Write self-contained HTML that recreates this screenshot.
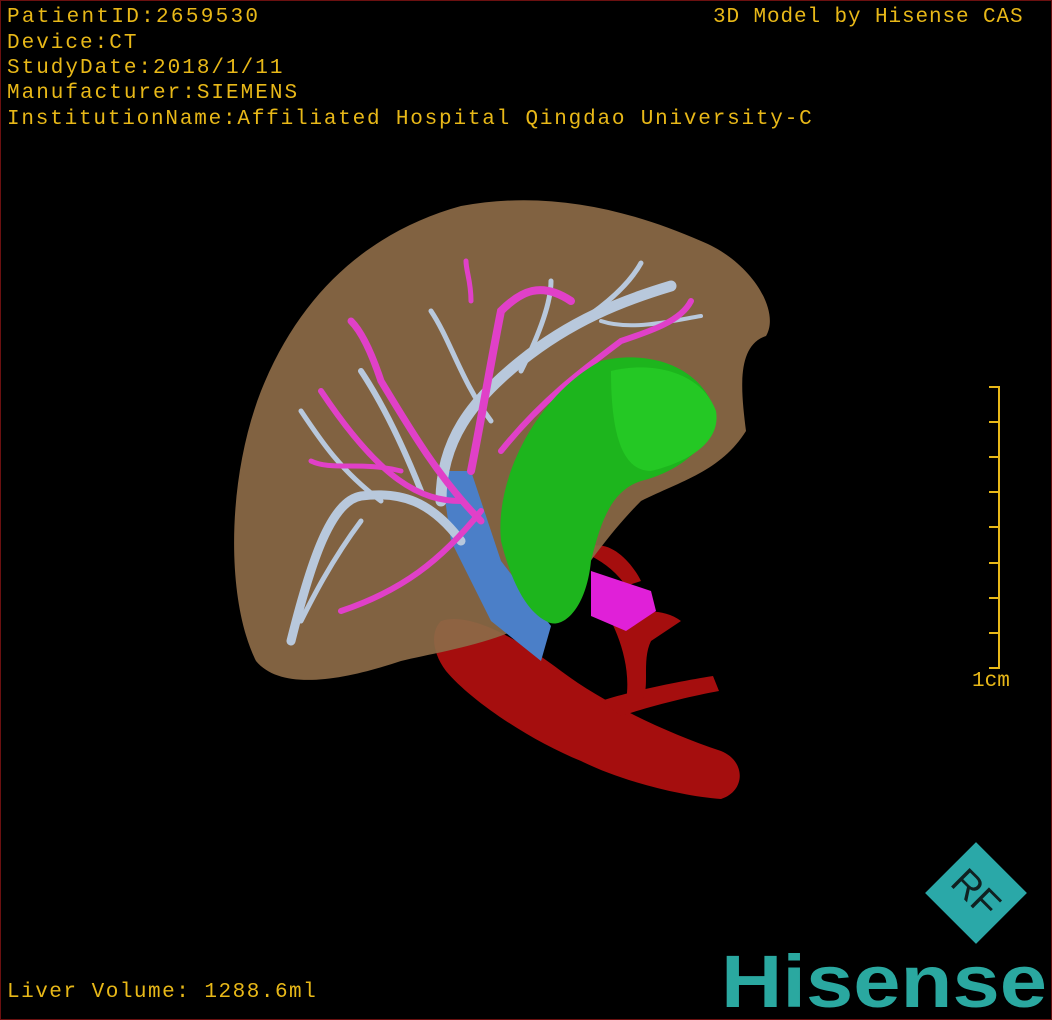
<!DOCTYPE html>
<html><head><meta charset="utf-8"><style>
html,body{margin:0;padding:0;background:#000}
#w{position:relative;width:1050px;height:1018px;border:1px solid #6b1010;background:#000;overflow:hidden;font-family:"Liberation Mono","DejaVu Sans Mono",monospace;color:#e8b818}
.t{position:absolute;font-size:21px;line-height:25px;white-space:pre;letter-spacing:2px}
svg{position:absolute;left:0;top:0}
</style></head><body><div id="w">
<svg width="1050" height="1018" viewBox="0 0 1050 1018">
<g fill="#a50e0e">
<path d="M440 620 C470 610 520 640 560 670 C600 700 660 730 720 750 C745 760 745 790 720 798 C680 795 620 780 580 760 C530 740 470 700 445 670 C430 650 430 630 440 620Z"/>
<path d="M600 700 C630 690 680 680 712 675 L718 690 C690 695 650 705 620 715Z"/>
<path d="M610 620 C630 610 660 605 680 620 L650 640 C640 660 650 690 640 700 L625 700 C630 670 620 640 610 620Z"/>
<path d="M590 545 C610 540 630 560 640 580 L625 585 C615 570 600 560 590 555Z"/>
</g>
<path d="M590 570 L650 590 L655 610 L625 630 L590 615Z" fill="#e020d8"/>
<path d="M255 660 C225 600 225 480 260 390 C300 290 370 230 460 205 C540 190 620 205 700 240 C750 260 780 310 765 335 C735 345 740 390 745 430 C720 470 680 480 640 500 C610 530 590 560 560 600 C520 640 440 650 400 660 C340 680 280 690 255 660Z" fill="#8c6a47" opacity="0.92"/>
<path d="M440 470 L470 470 L500 560 L550 625 L540 660 L490 620 L450 540Z" fill="#4b7fc8"/>
<g stroke="#b8c8dc" stroke-linecap="round" fill="none">
<path d="M460 540 C430 500 400 490 360 495 C330 500 310 560 290 640" stroke-width="9"/>
<path d="M440 500 C440 440 470 400 520 360 C570 320 620 300 670 285" stroke-width="11"/>
<path d="M420 490 C400 440 380 400 360 370" stroke-width="6"/>
<path d="M490 420 C460 380 450 340 430 310" stroke-width="5"/>
<path d="M520 370 C540 330 550 300 550 280" stroke-width="5"/>
<path d="M580 320 C610 300 630 280 640 262" stroke-width="5"/>
<path d="M380 500 C340 470 320 440 300 410" stroke-width="5"/>
<path d="M360 520 C330 560 310 600 300 620" stroke-width="5"/>
<path d="M600 320 C630 330 670 320 700 315" stroke-width="4"/>
</g>
<g stroke="#e040c8" stroke-linecap="round" fill="none">
<path d="M480 520 C440 480 410 430 380 380 C370 350 360 330 350 320" stroke-width="7"/>
<path d="M470 470 C480 420 490 360 500 310 C520 290 540 280 570 300" stroke-width="8"/>
<path d="M460 500 C420 500 380 480 320 390" stroke-width="6"/>
<path d="M480 510 C440 560 400 590 340 610" stroke-width="6"/>
<path d="M500 450 C540 400 580 370 620 340 C650 330 680 320 690 300" stroke-width="6"/>
<path d="M470 300 C470 280 465 270 465 260" stroke-width="5"/>
<path d="M400 470 C360 460 330 470 310 460" stroke-width="5"/>
</g>
<path d="M600 360 C640 350 690 360 710 400 C720 440 680 470 640 480 C610 490 600 520 590 560 C585 610 560 630 545 620 C525 610 510 580 500 540 C495 490 520 430 560 390 C575 375 590 365 600 360Z" fill="#1db51d"/>
<path d="M610 370 C650 360 700 370 715 410 C720 440 690 460 650 470 C620 470 610 430 610 370Z" fill="#24c824"/>
<g stroke="#e8b818" stroke-width="2" fill="none">
<path d="M998 385 L998 668"/>
<path d="M988 386 H998 M988 421 H998 M988 456 H998 M988 491 H998 M988 526 H998 M988 562 H998 M988 597 H998 M988 632 H998 M988 667 H998"/>
</g>
<g transform="translate(975 892) rotate(45)">
<rect x="-36" y="-36" width="72" height="72" fill="#2aa8a8"/>
<text x="0" y="13" text-anchor="middle" font-family="Liberation Sans,sans-serif" font-size="38" fill="#102020">RF</text>
</g>
<text x="720" y="1006" font-family="Liberation Sans,sans-serif" font-weight="bold" font-size="74" fill="#2aa8a0" textLength="326" lengthAdjust="spacingAndGlyphs">Hisense</text>
</svg>
<div class="t" style="left:6px;top:4px;letter-spacing:2.3px">PatientID:2659530</div>
<div class="t" style="left:6px;top:30px">Device:CT</div>
<div class="t" style="left:6px;top:55px">StudyDate:2018/1/11</div>
<div class="t" style="left:6px;top:80px">Manufacturer:SIEMENS</div>
<div class="t" style="left:6px;top:106px;letter-spacing:1.8px">InstitutionName:Affiliated Hospital Qingdao University-C</div>
<div class="t" style="left:712px;top:4px;letter-spacing:0.9px">3D Model by Hisense CAS</div>
<div class="t" style="left:971px;top:668px;letter-spacing:0">1cm</div>
<div class="t" style="left:6px;top:979px;letter-spacing:1.5px">Liver Volume: 1288.6ml</div>
</div></body></html>
